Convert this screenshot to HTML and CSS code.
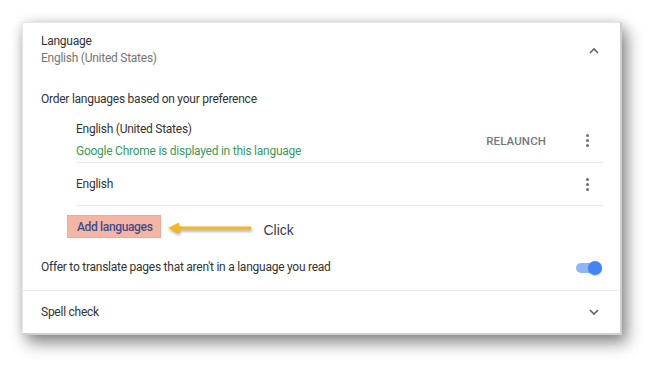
FILE: index.html
```html
<!DOCTYPE html>
<html lang="en">
<head>
<meta charset="utf-8">
<title>Language settings</title>
<link rel="stylesheet" href="styles.css">
</head>
<body>
<div class="page">
  <div class="card">
    <div class="header">
      <div class="titles">
        <div class="title">Language</div>
        <div class="subtitle">English (United States)</div>
      </div>
      <svg class="chev chev-up" width="10" height="7" viewBox="0 0 10 7"><path d="M1 6 L5 2 L9 6" fill="none" stroke="#5f6368" stroke-width="1.6"/></svg>
    </div>
    <div class="order">Order languages based on your preference</div>
    <div class="lang-list">
      <div class="lang-row first">
        <div class="lang-text">
          <div class="lang-name">English (United States)</div>
          <div class="lang-note">Google Chrome is displayed in this language</div>
        </div>
        <span class="relaunch">RELAUNCH</span>
        <span class="kebab"><i></i><i></i><i></i></span>
      </div>
      <div class="lang-row second">
        <div class="lang-text">
          <div class="lang-name">English</div>
        </div>
        <span class="kebab"><i></i><i></i><i></i></span>
      </div>
    </div>
    <div class="add-row">
      <span class="add-btn">Add languages</span>
      <svg class="arrow" width="86" height="16" viewBox="0 0 86 16"><path d="M11 8 H84" stroke="#f2b722" stroke-width="3"/><path d="M1 8 L12 2.5 L12 13.5 Z" fill="#f2b722"/></svg>
      <span class="click">Click</span>
    </div>
    <div class="toggle-row">
      <span>Offer to translate pages that aren't in a language you read</span>
      <span class="toggle"><span class="knob"></span></span>
    </div>
    <div class="spell-row">
      <span>Spell check</span>
      <svg class="chev" width="10" height="7" viewBox="0 0 10 7"><path d="M1 1 L5 5 L9 1" fill="none" stroke="#5f6368" stroke-width="1.6"/></svg>
    </div>
  </div>
</div>
</body>
</html>
```
FILE: styles.css
```css
html, body {
  margin: 0;
  padding: 0;
  background: #ffffff;
}
body {
  font-family: Roboto, "Liberation Sans", sans-serif;
  font-size: 12px;
  letter-spacing: -0.25px;
  color: #333333;
}
.page {
  width: 665px;
  height: 378px;
  padding: 22px 0 0 22px;
  box-sizing: border-box;
}
.card {
  width: 600px;
  height: 313px;
  box-sizing: border-box;
  background: #ffffff;
  border: 1px solid #e6e6e6;
  border-right: 2px solid #cfcfcf;
  border-bottom: 2px solid #cfcfcf;
  box-shadow: 5px 8px 15px rgba(0, 0, 0, 0.45), 0 0 10px rgba(0, 0, 0, 0.12);
  display: flex;
  flex-direction: column;
}
.header {
  display: flex;
  align-items: flex-start;
  padding: 10px 21px 0 18px;
}
.titles {
  flex: 1;
}
.title, .subtitle {
  line-height: 17px;
}
.subtitle {
  color: #757575;
}
.chev-up {
  margin-top: 14px;
}
.order {
  padding-left: 18px;
  margin-top: 24px;
  line-height: 17px;
}
.lang-list {
  margin: 0 17px 0 53px;
}
.lang-row {
  display: flex;
  align-items: center;
  border-bottom: 1px solid #ececec;
}
.lang-row.first {
  padding: 13px 0 2px;
}
.lang-row.second {
  height: 42px;
}
.lang-text {
  flex: 1;
}
.lang-name, .lang-note {
  line-height: 17px;
}
.lang-note {
  color: #3a9a5e;
  margin-top: 5px;
}
.relaunch {
  color: #75797d;
  font-weight: 500;
  font-size: 11.5px;
  letter-spacing: 0.1px;
  margin-right: 29px;
}
.kebab {
  width: 24px;
  height: 16px;
  margin-right: 4px;
  display: flex;
  flex-direction: column;
  align-items: center;
  justify-content: center;
  gap: 2px;
}
.kebab i {
  display: block;
  width: 3px;
  height: 3px;
  border-radius: 50%;
  background: #6b6f73;
}
.add-row {
  display: flex;
  align-items: center;
  padding-left: 44px;
  margin-top: 9px;
}
.add-btn {
  background: #f5b5a5;
  color: #3f4b8c;
  font-weight: 500;
  letter-spacing: -0.35px;
  height: 23px;
  line-height: 23px;
  padding: 0 8px 0 9px;
  border: 1px solid #f2a999;
  box-sizing: border-box;
}
.arrow {
  margin-left: 6px;
  margin-top: 3px;
  filter: drop-shadow(1px 2px 1.5px rgba(0, 0, 0, 0.35));
}
.click {
  margin-left: 10px;
  font-family: "Liberation Sans", Arial, sans-serif;
  font-size: 14px;
  letter-spacing: 0;
  color: #3b3c4e;
  margin-top: 6px;
}
.toggle-row {
  display: flex;
  align-items: center;
  justify-content: space-between;
  padding: 21px 18px 14px 18px;
  line-height: 17px;
  border-bottom: 1px solid #ececec;
}
.toggle {
  position: relative;
  width: 26px;
  height: 10px;
  border-radius: 5px;
  background: #8fb5f6;
}
.knob {
  position: absolute;
  right: 0;
  top: -2px;
  width: 14px;
  height: 14px;
  border-radius: 50%;
  background: #4285f4;
  box-shadow: 0 1px 1px rgba(0, 0, 0, 0.2);
}
.spell-row {
  flex: 1;
  display: flex;
  align-items: center;
  justify-content: space-between;
  padding: 0 21px 0 18px;
}
```
